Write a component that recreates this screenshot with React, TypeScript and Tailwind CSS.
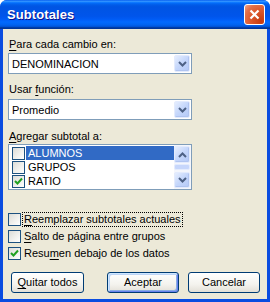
import React from "react";

const FONT = { fontFamily: '"Liberation Sans", Arial, sans-serif' };

function U({ children }: { children: React.ReactNode }) {
  return <span className="underline underline-offset-[2px]">{children}</span>;
}

function Chevron({ up = false }: { up?: boolean }) {
  return (
    <svg width="9" height="6" viewBox="0 0 9 6" className="block">
      <path
        d={up ? "M1 5 L4.5 1.5 L8 5" : "M1 1 L4.5 4.5 L8 1"}
        fill="none"
        stroke="#4D6185"
        strokeWidth="2"
      />
    </svg>
  );
}

function ArrowBtn({ up = false, h = "h-full" }: { up?: boolean; h?: string }) {
  return (
    <div
      className={`w-[16px] ${h} rounded-[2px] border border-[#E3EBFD] bg-[linear-gradient(135deg,#E6EEFE_0%,#C4D6FB_50%,#B4C9F7_100%)] flex items-center justify-center shadow-[inset_-1px_-1px_0_#B0C4F0]`}
    >
      <Chevron up={up} />
    </div>
  );
}

function Combo({ value }: { value: string }) {
  return (
    <div className="w-[184px] h-[21px] border border-[#7F9DB9] bg-white flex items-stretch p-[1px]">
      <div className="flex-1 flex items-center pl-[2px] pt-[1px] text-[11px] text-black">{value}</div>
      <ArrowBtn />
    </div>
  );
}

function Check({ checked = false }: { checked?: boolean }) {
  return (
    <div className="w-[13px] h-[13px] shrink-0 border border-[#1C5180] bg-[linear-gradient(135deg,#DCDCD7_0%,#F2F2EF_60%,#FFFFFF_100%)] flex items-center justify-center">
      {checked && (
        <svg width="9" height="9" viewBox="0 0 9 9" className="block">
          <path d="M1 4 L3.5 6.5 L8 1.5" fill="none" stroke="#21A121" strokeWidth="2" />
        </svg>
      )}
    </div>
  );
}

const items = [
  { label: "ALUMNOS", checked: false, selected: true },
  { label: "GRUPOS", checked: false, selected: false },
  { label: "RATIO", checked: true, selected: false },
];

function XpButton({ children, primary = false, w }: { children: React.ReactNode; primary?: boolean; w: string }) {
  return (
    <button
      className={`${w} h-[21px] rounded-[3px] border border-[#003C74] text-[11px] text-black bg-[linear-gradient(to_bottom,#FFFFFF_0%,#F4F3EE_60%,#E3E0D7_100%)] ${
        primary ? "shadow-[inset_1px_1px_0_#CEE7FF,inset_-1px_-1px_0_#6982EE,inset_2px_2px_0_#BCD4F6,inset_-2px_-2px_0_#89ADE4]" : ""
      }`}
    >
      {children}
    </button>
  );
}

export default function App() {
  return (
    <div style={FONT} className="w-[270px] h-[302px] bg-white">
      <div className="w-[270px] h-[302px] rounded-t-[7px] bg-[#0A4CE0] flex flex-col overflow-hidden">
        {/* Title bar */}
        <div className="h-[29px] shrink-0 flex items-center justify-between pl-[7px] pr-[5px] bg-[linear-gradient(to_bottom,#0058EE_0%,#3593FF_4%,#288EFF_6%,#127DFF_8%,#036FFC_10%,#0262EE_14%,#0057E5_20%,#0054E3_24%,#0055EB_56%,#005BF5_66%,#026AFE_76%,#0062EF_86%,#0052D6_92%,#0040AB_94%,#003092_100%)]">
          <span className="text-white font-bold text-[13px] leading-none tracking-[0.1px] [text-shadow:1px_1px_0_#0F1089]">
            Subtotales
          </span>
          <div className="w-[21px] h-[21px] rounded-[3px] border border-white bg-[radial-gradient(circle_at_85%_85%,#C53A0E_0%,#DD5A2E_50%,#E3704A_75%,#F2A48A_100%)] flex items-center justify-center">
            <svg width="11" height="11" viewBox="0 0 11 11" className="block">
              <path d="M1.5 1.5 L9.5 9.5 M9.5 1.5 L1.5 9.5" stroke="white" strokeWidth="2.2" />
            </svg>
          </div>
        </div>

        {/* Body */}
        <div className="flex-1 mx-[3px] mb-[3px] bg-[#ECE9D8] px-[5px] pt-[9px] text-[11px] leading-[13px] text-black flex flex-col">
          <div className="pl-[1px] h-[13px]">
            <U>P</U>ara cada cambio en:
          </div>
          <div className="mt-[2px]">
            <Combo value="DENOMINACION" />
          </div>

          <div className="pl-[1px] h-[13px] mt-[9px]">
            Usar <U>f</U>unción:
          </div>
          <div className="mt-[3px]">
            <Combo value="Promedio" />
          </div>

          <div className="pl-[1px] h-[13px] mt-[10px]">
            <U>A</U>gregar subtotal a:
          </div>
          <div className="mt-[1px] w-[184px] h-[46px] border border-[#7F9DB9] bg-white flex">
            <div className="flex-1 pt-[1px] pl-[3px]">
              {items.map((it) => (
                <div key={it.label} className="h-[14px] flex items-center">
                  <Check checked={it.checked} />
                  <div
                    className={`ml-[1px] flex-1 h-[14px] pl-[2px] flex items-center ${
                      it.selected ? "bg-[#316AC5] text-white" : ""
                    }`}
                  >
                    {it.label}
                  </div>
                </div>
              ))}
            </div>
            <div className="w-[17px] flex flex-col bg-[#F4F6FC] py-[1px]">
              <ArrowBtn up h="h-[17px]" />
              <div className="flex-1 flex flex-col justify-start pt-[1px]">
                <div className="w-[16px] h-[6px] rounded-[2px] border border-[#E3EBFD] bg-[#C6D6FB]" />
              </div>
              <ArrowBtn h="h-[16px]" />
            </div>
          </div>

          <div className="mt-[21px] flex flex-col">
            <div className="h-[17px] flex items-center">
              <Check />
              <span className="ml-[2px] px-[1px] outline-1 outline-dotted outline-black">
                <U>R</U>eemplazar subtotales actuales
              </span>
            </div>
            <div className="h-[17px] flex items-center">
              <Check />
              <span className="ml-[3px]">
                <U>S</U>alto de página entre grupos
              </span>
            </div>
            <div className="h-[17px] flex items-center">
              <Check checked />
              <span className="ml-[3px]">
                Resu<U>m</U>en debajo de los datos
              </span>
            </div>
          </div>

          <div className="mt-[10px] flex items-center pl-[3px]">
            <XpButton w="w-[73px]">
              <U>Q</U>uitar todos
            </XpButton>
            <div className="ml-[23px]">
              <XpButton w="w-[72px]" primary>
                Aceptar
              </XpButton>
            </div>
            <div className="ml-[9px]">
              <XpButton w="w-[72px]">Cancelar</XpButton>
            </div>
          </div>
        </div>
      </div>
    </div>
  );
}
